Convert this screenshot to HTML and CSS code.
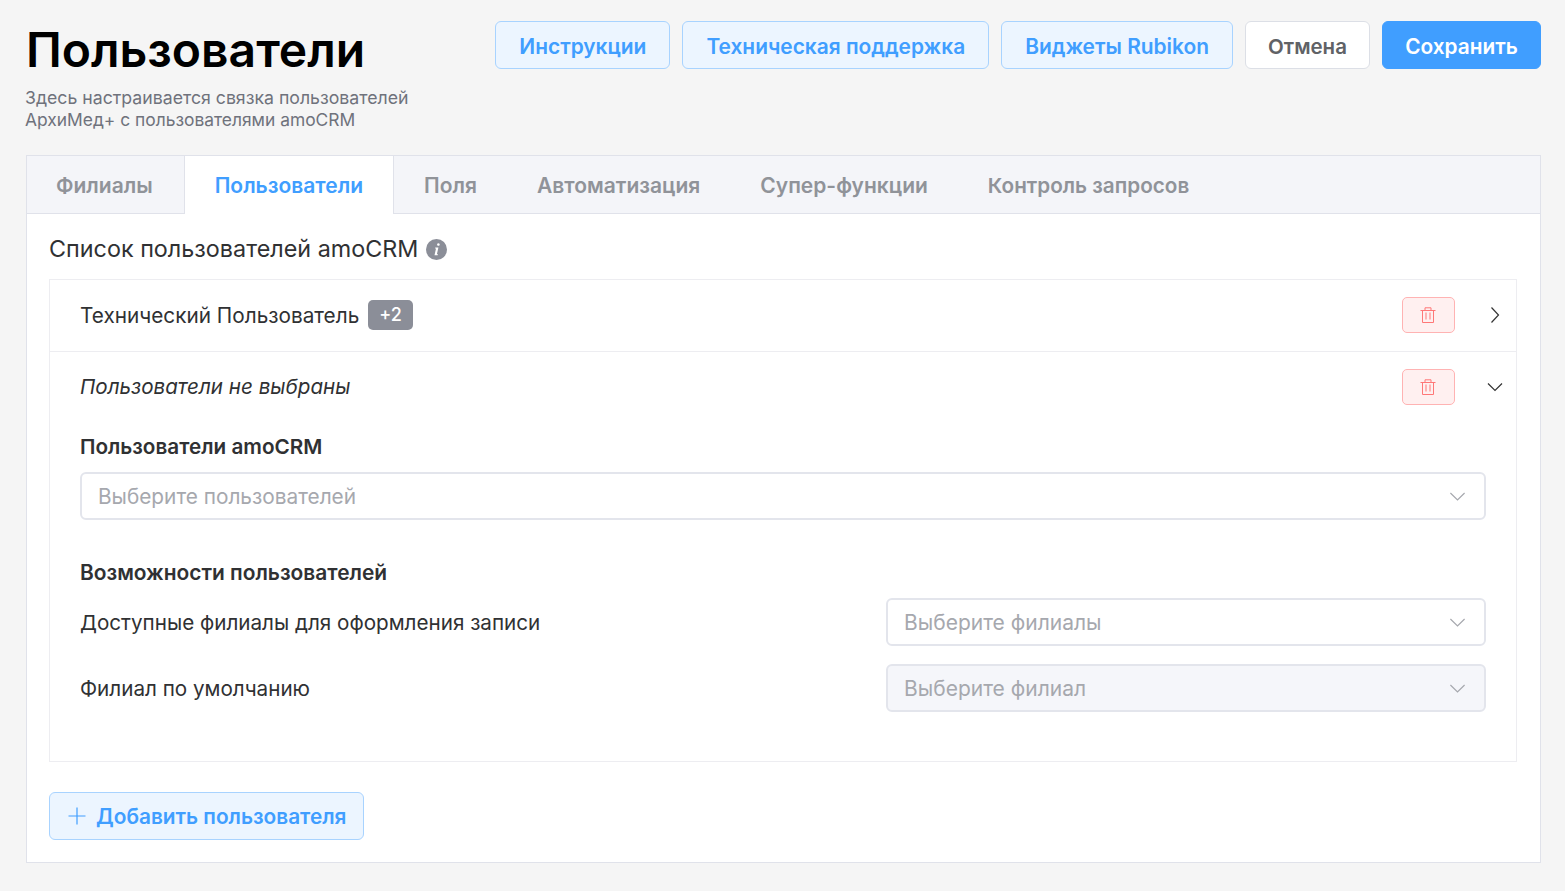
FILE: index.html
```html
<!DOCTYPE html>
<html lang="ru">
<head>
<meta charset="utf-8">
<title>Пользователи</title>
<link rel="stylesheet" href="styles.css">
</head>
<body>
<div class="page">
  <header class="head">
    <div class="head-text">
      <h1 class="title">Пользователи</h1>
      <p class="subtitle">Здесь настраивается связка пользователей<br><span class="subtitle-second">АрхиМед+ с пользователями amoCRM</span></p>
    </div>
    <div class="actions">
      <button class="btn btn-soft">Инструкции</button>
      <button class="btn btn-soft">Техническая поддержка</button>
      <button class="btn btn-soft">Виджеты Rubikon</button>
      <button class="btn btn-plain">Отмена</button>
      <button class="btn btn-primary">Сохранить</button>
    </div>
  </header>
  <section class="panel">
    <nav class="tabs">
      <div class="tab tab-first">Филиалы</div>
      <div class="tab tab-active">Пользователи</div>
      <div class="tab">Поля</div>
      <div class="tab">Автоматизация</div>
      <div class="tab">Супер-функции</div>
      <div class="tab tab-last">Контроль запросов</div>
    </nav>
    <div class="body">
      <h2 class="list-title">Список пользователей amoCRM
        <svg class="info" viewBox="0 0 21 21" width="21" height="21"><circle cx="10.5" cy="10.5" r="10.5" fill="#8b8e98"/><path d="M12.4 4.200a1.300 1.300 0 1 1-.01 0zM9.300 8.500h3.100l-1.500 6.700h1.100l-.3 1.100H8.500l1.500-6.700H9z" fill="#fff"/></svg>
      </h2>
      <div class="list">
        <div class="row">
          <div class="row-label">Технический Пользователь <span class="badge">+2</span></div>
          <button class="del" aria-label="Удалить"><svg viewBox="0 0 16 16" width="16" height="16" fill="none" stroke="#f77" stroke-width="1"><path d="M.5 3.500h15M5 3.500V.8h6v2.700M2.500 3.500v12h11v-12M6 5.500v7M10 5.500v7"/></svg></button>
          <svg class="chev" viewBox="0 0 16 16" width="16" height="16" fill="none" stroke="#333" stroke-width="1.200"><path d="M4.500.5l7 7.500-7 7.500"/></svg>
        </div>
        <div class="row row-open">
          <div class="row-label row-empty">Пользователи не выбраны</div>
          <button class="del" aria-label="Удалить"><svg viewBox="0 0 16 16" width="16" height="16" fill="none" stroke="#f77" stroke-width="1"><path d="M.5 3.500h15M5 3.500V.8h6v2.700M2.500 3.500v12h11v-12M6 5.500v7M10 5.500v7"/></svg></button>
          <svg class="chev" viewBox="0 0 16 16" width="16" height="16" fill="none" stroke="#333" stroke-width="1.200"><path d="M1 4.500l7 7 7-7"/></svg>
        </div>
        <div class="details">
          <div class="field-title">Пользователи amoCRM</div>
          <div class="select">Выберите пользователей
            <svg viewBox="0 0 15 9" width="15" height="9" fill="none" stroke="#a6a8ae" stroke-width="1.200"><path d="M.4 1l7.100 7 7.100-7"/></svg>
          </div>
          <div class="caps-title">Возможности пользователей</div>
          <div class="cap">
            <div class="cap-label">Доступные филиалы для оформления записи</div>
            <div class="select select-half">Выберите филиалы
              <svg viewBox="0 0 15 9" width="15" height="9" fill="none" stroke="#a6a8ae" stroke-width="1.200"><path d="M.4 1l7.100 7 7.100-7"/></svg>
            </div>
          </div>
          <div class="cap">
            <div class="cap-label">Филиал по умолчанию</div>
            <div class="select select-half select-off">Выберите филиал
              <svg viewBox="0 0 15 9" width="15" height="9" fill="none" stroke="#a6a8ae" stroke-width="1.200"><path d="M.4 1l7.100 7 7.100-7"/></svg>
            </div>
          </div>
        </div>
      </div>
      <button class="btn btn-soft btn-add">
        <svg viewBox="0 0 18 18" width="18" height="18" fill="none" stroke="#409eff" stroke-width="1.200"><path d="M9 .5v17M.5 9h17"/></svg>
        Добавить пользователя
      </button>
    </div>
  </section>
</div>
</body>
</html>
```
FILE: styles.css
```css
* { box-sizing: border-box; }
html, body { margin: 0; padding: 0; }
body {
  background: #f5f5f5;
  font-family: Inter, "Noto Sans", sans-serif;
  color: #303133;
}
.page { padding: 21px 24px 28px 26px; }
.head { display: flex; justify-content: space-between; align-items: flex-start; height: 134px; }
.title { margin: 0; font-size: 48px; line-height: 58px; font-weight: 600; color: #000; }
.subtitle { margin: 8px 0 0 -1px; font-size: 17.700px; line-height: 22px; color: #6f727c; }
.subtitle-second { font-size: 17.400px; }
.actions { display: flex; gap: 12px; }
.btn {
  height: 48px;
  padding: 2px 23px 0;
  border-radius: 6px;
  border: 1px solid #dcdfe6;
  font-family: inherit;
  font-size: 20.900px;
  font-weight: 600;
  white-space: nowrap;
}
.btn-soft { background: #ecf5ff; border-color: #a8d3ff; color: #409eff; }
.btn-plain { width: 125px; padding: 2px 0 0; background: #fff; color: #606266; font-size: 20.500px; }
.btn-primary { width: 159px; padding: 2px 0 0; background: #409eff; border-color: #409eff; color: #fff; font-size: 20.800px; }
.btn-add { display: flex; align-items: center; gap: 10px; padding: 0 17px 0 18px; margin-top: 30px; font-size: 20.800px; }
.panel { background: #fff; border: 1px solid #e0e2ea; height: 708px; }
.tabs { display: flex; height: 58px; background: #f4f5f9; border-bottom: 1px solid #e0e2ea; }
.tab {
  padding: 0 30px;
  font-size: 21px;
  line-height: 59px;
  font-weight: 600;
  color: #909399;
  height: 58px;
}
.tab-first { padding: 0 31px 0 29px; }
.tab-last { font-size: 20.700px; }
.tab-active {
  background: #fff;
  color: #409eff;
  border-left: 1px solid #e0e2ea;
  border-right: 1px solid #e0e2ea;
}
.body { padding: 18px 23px 0 22px; }
.list-title {
  display: flex;
  align-items: center;
  gap: 8px;
  margin: 0;
  height: 34px;
  padding-bottom: 2px;
  font-size: 23.350px;
  font-weight: 400;
  color: #303133;
}
.info { flex: none; margin-top: 2px; }
.list { margin-top: 13px; border: 1px solid #ededf1; height: 483px; }
.row { display: flex; align-items: center; height: 72px; padding: 0 13px 1px 30px; border-bottom: 1px solid #ededf1; }
.row-open { border-bottom: 0; height: 70px; padding-bottom: 0; }
.row-label { flex: 1; display: flex; align-items: center; gap: 9px; font-size: 20.750px; color: #303133; }
.row-empty { font-size: 20.600px; padding-bottom: 2px; }
.row-empty { font-style: italic; }
.badge {
  display: inline-block;
  height: 30px;
  padding: 0 11px;
  border-radius: 5px;
  background: #8b8e98;
  color: #fff;
  font-size: 18px;
  line-height: 30px;
  font-weight: 500;
}
.del {
  width: 53px;
  height: 36px;
  display: flex;
  align-items: center;
  justify-content: center;
  padding: 0;
  background: #fff0f0;
  border: 1px solid #ffb3b3;
  border-radius: 5px;
  margin-right: 32px;
}
.del svg { margin-right: 1px; }
.chev { flex: none; }
.details { padding: 0 30px; }
.field-title { font-size: 20.700px; font-weight: 600; line-height: 28px; margin-top: 11px; color: #303133; }
.select {
  display: flex;
  align-items: center;
  justify-content: space-between;
  height: 48px;
  margin-top: 11px;
  padding: 0 19px 0 16px;
  background: #fff;
  border: 2px solid #e3e5ec;
  border-radius: 6px;
  font-size: 20.800px;
  color: #a6a8ae;
}
.caps-title { margin-top: 39px; font-size: 20.900px; font-weight: 600; line-height: 28px; color: #303133; }
.cap { display: flex; align-items: center; justify-content: space-between; margin-top: 18px; font-size: 20.650px; }
.caps-title + .cap { margin-top: 11px; }
.cap-label { color: #303133; }
.select-half { width: 600px; margin-top: 0; font-size: 21px; }
.select-off { background: #f5f6fa; }
```
